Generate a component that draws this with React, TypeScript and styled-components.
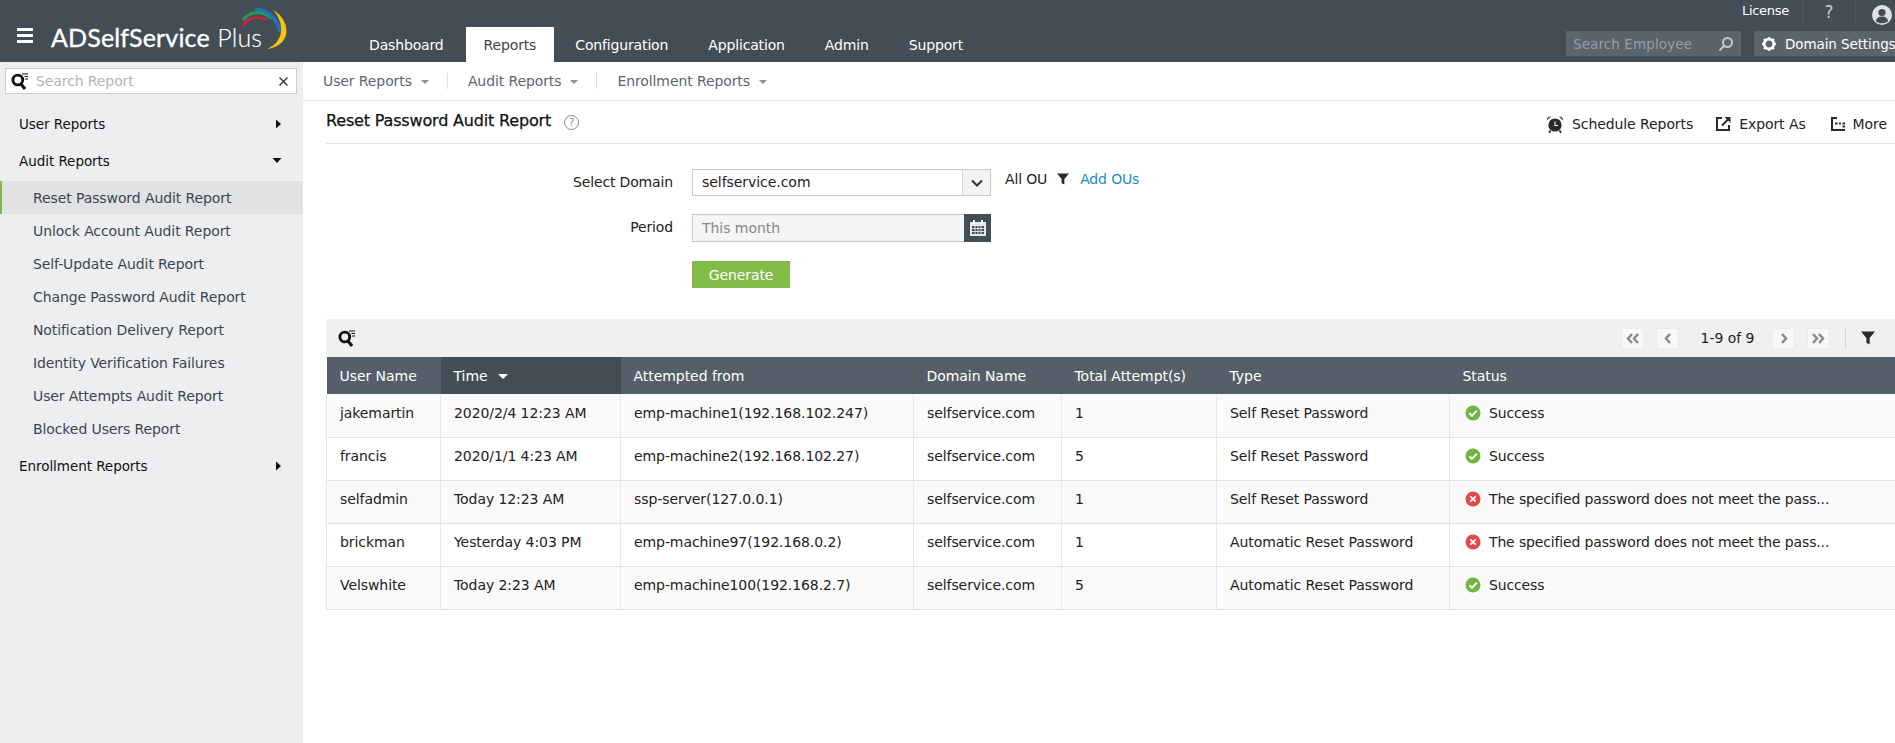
import React from "react";
import styled, { createGlobalStyle } from "styled-components";

const FONT = `"DejaVu Sans", Verdana, sans-serif`;

const Global = createGlobalStyle`
  html, body { margin: 0; padding: 0; height: 100%; overflow: hidden; background: #fff; }
  body { font-family: ${FONT}; font-size: 14px; color: #222; }
  #root { width: 1895px; height: 743px; overflow: hidden; }
  * { box-sizing: border-box; }
`;

const Page = styled.div`display: flex; flex-direction: column; width: 1895px; height: 743px;`;

const Header = styled.header`
  height: 62px; flex: none; background: #424d56; display: flex; align-items: stretch; color: #fff;
`;
const Burger = styled.div`
  width: 16px; height: 15px; margin: 28px 0 0 17px; flex: none;
  border-top: 3px solid #fff; border-bottom: 3px solid #fff; position: relative;
  &::after { content: ""; position: absolute; left: 0; right: 0; top: 3px; height: 3px; background: #fff; }
`;
const Logo = styled.div`
  width: 298px; flex: none; margin-left: 18px; display: flex; align-items: flex-start; padding-top: 21px;
  position: relative; white-space: nowrap;
  font: 400 25px/32px "Lato", sans-serif; letter-spacing: .15px; color: #fff; -webkit-text-stroke: .35px #fff;
  span { font-weight: 300; -webkit-text-stroke: .15px #fff; margin-left: 1px; }
  svg { position: absolute; left: 189px; top: 5px; }
`;
const Tabs = styled.nav`display: flex; align-items: flex-end; height: 62px;`;
const Tab = styled.div<{ $active?: boolean }>`
  height: 35px; padding: 1px ${p => (p.$active ? 18 : 20)}px 0; display: flex; align-items: center; justify-content: center;
  margin: 0 ${p => (p.$active ? 1 : 0)}px 0 ${p => (p.$active ? 2 : 0)}px;
  background: ${p => (p.$active ? "#fff" : "transparent")}; color: ${p => (p.$active ? "#444" : "#fff")};
  font-size: 14px; letter-spacing: -.15px;
`;
const HeaderRight = styled.div`
  margin-left: auto; display: flex; flex-direction: column; align-items: flex-start; width: 329px; flex: none;
`;
const TopLinks = styled.div`
  display: flex; align-items: center; height: 31px; padding-left: 176px; font-size: 13px; letter-spacing: -.3px;
`;
const License = styled.div`width: 61px; height: 24px; line-height: 22px; border-right: 1px solid #4f5a63; margin-top: -7px;`;
const Help = styled.div`
  width: 53px; height: 24px; line-height: 24px; text-align: center; border-right: 1px solid #4f5a63; font-size: 17px;
  color: #c9cdd1; margin-top: -7px; letter-spacing: 0;
`;
const Avatar = styled.svg`margin-left: 16px; flex: none; margin-top: -1px;`;
const BottomTools = styled.div`display: flex; gap: 13px; height: 25px;`;
const EmpSearch = styled.div`
  width: 175px; background: #59646d; display: flex; align-items: center; justify-content: space-between;
  padding: 0 7px; color: #95a0a8; font-size: 13.5px; letter-spacing: .1px;
`;
const DomainBtn = styled.div`
  width: 160px; background: #59646d; display: flex; align-items: center; gap: 8px; padding-left: 7px;
  color: #fff; font-size: 13.5px; white-space: nowrap; letter-spacing: -.1px;
`;

const Body = styled.div`flex: 1; display: flex; min-height: 0;`;

const Sidebar = styled.aside`width: 303px; flex: none; background: #eceef0; padding-top: 6px;`;
const SideSearch = styled.div`
  margin: 0 6px 0 5px; height: 26px; background: #fff; border: 1px solid #ccc; display: flex; align-items: center;
  padding: 0 7px 0 5px; gap: 7px; color: #b4b4b4; font-size: 14px; letter-spacing: -.1px;
  span { flex: 1; }
`;
const SideGroup = styled.div<{ $first?: boolean }>`
  height: 37px; margin-top: ${p => (p.$first ? 11 : 0)}px; display: flex; align-items: center; justify-content: space-between;
  padding: 0 21px 0 19px; color: #111; font-size: 13.5px; letter-spacing: -.05px;
`;
const SideList = styled.div`padding: 2px 0;`;
const SideItem = styled.div<{ $active?: boolean }>`
  height: 33.1px; padding-left: ${p => (p.$active ? 31 : 33)}px; display: flex; align-items: center;
  color: #3d4650; font-size: 14px; letter-spacing: -.1px;
  background: ${p => (p.$active ? "#e0e2e4" : "transparent")};
  border-left: ${p => (p.$active ? "2px solid #7cbb44" : "0")};
`;

const Main = styled.main`flex: 1; min-width: 0; display: flex; flex-direction: column;`;
const SubNav = styled.div`
  height: 39px; flex: none; border-bottom: 1px solid #e4e4e4; display: flex; align-items: center; padding-left: 20px;
  color: #5c6670; font-size: 14px; letter-spacing: -.1px;
`;
const SubItem = styled.div`
  display: flex; align-items: center; gap: 9px; padding-right: 18px; margin-right: 20px; height: 16px;
  border-right: 1px solid #e2e2e2;
  &:last-child { border-right: 0; }
`;
const Caret = styled.i<{ $color?: string; $size?: number }>`
  display: block; width: 0; height: 0;
  border-left: ${p => p.$size ?? 4.5}px solid transparent; border-right: ${p => p.$size ?? 4.5}px solid transparent;
  border-top: ${p => p.$size ?? 4.5}px solid ${p => p.$color || "#8a9199"}; margin-top: 2px;
`;
const Content = styled.div`padding-left: 23px; display: flex; flex-direction: column;`;
const TitleRow = styled.div`
  height: 43px; flex: none; border-bottom: 1px solid #e4e4e4; display: flex; align-items: center;
`;
const Title = styled.h1`
  margin: -2px 0 0; font: 400 16px/1 ${FONT}; color: #111; letter-spacing: -.17px; -webkit-text-stroke: .25px #111;
`;
const HelpCircle = styled.span`
  width: 15px; height: 15px; margin-left: 13px; border-radius: 50%; border: 1px solid #8d8d8d; color: #8d8d8d;
  font-size: 10px; display: flex; align-items: center; justify-content: center;
`;
const Actions = styled.div`margin-left: auto; display: flex; align-items: center; padding: 3px 8px 0 0; height: 100%;`;
const Action = styled.div`
  display: flex; align-items: center; gap: 8px; margin-left: 23px; color: #222; font-size: 14px; letter-spacing: -.08px;
  &:last-child { margin-left: 25px; }
`;

const Form = styled.div`
  display: grid; grid-template-columns: 347px 299px auto; grid-template-rows: 27px 29px 27px; column-gap: 19px; row-gap: 18px;
  padding-top: 25px; align-items: start;
`;
const Label = styled.label`text-align: right; font-size: 14px; line-height: 27px; color: #222; letter-spacing: -.15px;`;
const SelectBox = styled.div`
  height: 27px; border: 1px solid #c9c9c9; display: flex; align-items: stretch; background: #fff;
`;
const SelectValue = styled.div<{ $lh?: number }>`flex: 1; padding-left: 9px; line-height: ${p => p.$lh ?? 25}px; letter-spacing: -.05px;`;
const SelectBtn = styled.div`
  width: 28px; background: #f3f3f3; border-left: 1px solid #d5d5d5; display: flex; align-items: center; justify-content: center;
`;
const OuBlock = styled.div`
  display: flex; align-items: center; margin-left: -5px; height: 20px; letter-spacing: -.15px;
  a { color: #1a8ccc; margin-left: 11px; }
  svg { margin-left: 10px; }
`;
const DateBox = styled.div`
  height: 28px; border: 1px solid #c9c9c9; background: #f5f5f5; display: flex; align-items: stretch; color: #888;
`;
const DateBtn = styled.div`
  width: 27px; margin: -1px -1px -1px 0; background: #424d56; display: flex; align-items: center; justify-content: center;
`;
const Generate = styled.button`
  grid-column: 2; width: 98px; height: 27px; border: 0; padding: 0; background: #7fbc48; color: #fff;
  font: 14px ${FONT}; letter-spacing: -.1px;
`;

const Toolbar = styled.div`
  margin-top: 31px; height: 38px; background: #f0f0f0; display: flex; align-items: center; padding-left: 12px; padding-right: 20px;
`;
const Pager = styled.div`margin-left: auto; display: flex; align-items: center;`;
const PageBtn = styled.div<{ $mr?: number }>`
  width: 23px; height: 21px; background: #f8f8f8; border: 1px solid #ebebeb; display: flex; align-items: center; justify-content: center;
  margin-right: ${p => p.$mr ?? 0}px;
`;
const PageText = styled.div`margin: 0 17px 0 21px; width: 55px; text-align: center; white-space: nowrap; letter-spacing: -.05px;`;
const PageSep = styled.div`width: 1px; height: 21px; background: #d4d4d4; margin: 0 15px;`;

const Table = styled.table`
  border-collapse: collapse; table-layout: fixed; width: 1569px; font-size: 14px;
`;
const Th = styled.th<{ $sorted?: boolean }>`
  height: 37px; padding: 0 0 0 13px; background: ${p => (p.$sorted ? "#424d56" : "#565f69")}; color: #fff;
  font-weight: 400; text-align: left; letter-spacing: -.05px;
`;
const ThInner = styled.span`display: inline-flex; align-items: center; gap: 10px;`;
const Tr = styled.tr<{ $odd?: boolean }>`
  background: ${p => (p.$odd ? "#fafafa" : "#fff")};
`;
const Td = styled.td`
  height: 43px; padding: 0 0 5px 13px; border-bottom: 1px solid #e2e2e2; border-right: 1px solid #e8e8e8; color: #222;
  white-space: nowrap; letter-spacing: -.08px;
  &:first-child { border-left: 1px solid #e8e8e8; }
  &:last-child { border-right: 0; letter-spacing: -.15px; }
`;
const Status = styled.div`display: flex; align-items: center; gap: 8px; padding-left: 2px;`;

const ScanIcon = () => (
  <svg width="18" height="18" viewBox="0 0 18 18" fill="none">
    <circle cx="6.8" cy="8" r="4.9" stroke="#111" strokeWidth="2.9" />
    <path d="M10 12 14 17" stroke="#111" strokeWidth="3" />
    <path d="M11 2h6M13.5 4.5H17M14 7h3" stroke="#111" strokeWidth="1.1" />
  </svg>
);
const Cross = () => (
  <svg width="11" height="11" viewBox="0 0 11 11"><path d="M1.5 1.5l8 8M9.5 1.5l-8 8" stroke="#333" strokeWidth="1.4" /></svg>
);
const RightTri = () => (
  <svg width="7" height="10" viewBox="0 0 7 10"><path d="M1 0.5 6 5 1 9.5Z" fill="#111" /></svg>
);
const DownTri = () => (
  <svg width="10" height="7" viewBox="0 0 10 7"><path d="M.5 1h9L5 6Z" fill="#111" /></svg>
);
const Funnel = ({ s = 13 }: { s?: number }) => (
  <svg width={s} height={s} viewBox="0 0 13 13"><path d="M0 .5h13L8 6.5V12.5L5 11V6.5Z" fill="#2a2a2a" /></svg>
);
const Ok = () => (
  <svg width="16" height="16" viewBox="0 0 16 16"><circle cx="8" cy="8" r="7.5" fill="#6fb53f" /><path d="M4.3 8.2 7 10.9 11.8 5.6" stroke="#fff" strokeWidth="2" fill="none" /></svg>
);
const Bad = () => (
  <svg width="16" height="16" viewBox="0 0 16 16"><circle cx="8" cy="8" r="7.5" fill="#e5484d" /><path d="M5.3 5.3l5.4 5.4M10.7 5.3l-5.4 5.4" stroke="#fff" strokeWidth="1.8" /></svg>
);
const Dbl = ({ right }: { right?: boolean }) => (
  <svg width="13" height="11" viewBox="0 0 13 11" fill="none" stroke="#868b90" strokeWidth="2.5">
    <path d={right ? "M1 1l4 4.5-4 4.5M7 1l4 4.5-4 4.5" : "M12 1L8 5.5l4 4.5M6 1L2 5.5 6 10"} />
  </svg>
);
const Sgl = ({ right }: { right?: boolean }) => (
  <svg width="8" height="11" viewBox="0 0 8 11" fill="none" stroke="#868b90" strokeWidth="2.5">
    <path d={right ? "M2 1l4 4.5-4 4.5" : "M6 1L2 5.5 6 10"} />
  </svg>
);

const rows: [string, string, string, string, string, string, boolean, string][] = [
  ["jakemartin", "2020/2/4 12:23 AM", "emp-machine1(192.168.102.247)", "selfservice.com", "1", "Self Reset Password", true, "Success"],
  ["francis", "2020/1/1 4:23 AM", "emp-machine2(192.168.102.27)", "selfservice.com", "5", "Self Reset Password", true, "Success"],
  ["selfadmin", "Today 12:23 AM", "ssp-server(127.0.0.1)", "selfservice.com", "1", "Self Reset Password", false, "The specified password does not meet the pass..."],
  ["brickman", "Yesterday 4:03 PM", "emp-machine97(192.168.0.2)", "selfservice.com", "1", "Automatic Reset Password", false, "The specified password does not meet the pass..."],
  ["Velswhite", "Today 2:23 AM", "emp-machine100(192.168.2.7)", "selfservice.com", "5", "Automatic Reset Password", true, "Success"],
];
const sideItems = [
  "Reset Password Audit Report", "Unlock Account Audit Report", "Self-Update Audit Report", "Change Password Audit Report",
  "Notification Delivery Report", "Identity Verification Failures", "User Attempts Audit Report", "Blocked Users Report",
];
const widths = [114, 180, 293, 148, 155, 233, 446];
const heads = ["User Name", "Time", "Attempted from", "Domain Name", "Total Attempt(s)", "Type", "Status"];

export default function App() {
  return (
    <Page>
      <Global />
      <Header>
        <Burger />
        <Logo>
          ADSelfService&nbsp;<span>Plus</span>
          <svg width="50" height="48" viewBox="0 0 50 48" fill="none">
            <path d="M3 22C6 16 10 13 15 12.5C19 12 23 13 27 15" stroke="#c8243d" strokeWidth="2.8" />
            <path d="M3 15C8 9 14 7.5 18 7.5C23 7.5 28 10 32 14" stroke="#1e9b58" strokeWidth="3" />
            <path d="M15 4.5C25 3.5 37 11 40 27" stroke="#2170b8" strokeWidth="3.4" />
            <path d="M33 5C44 11 48 22 46 30C44 38 36 43 27 44C34 41 40 35 41 27C42 19 38 10 33 5Z" fill="#f1c40f" />
          </svg>
        </Logo>
        <Tabs>
          <Tab>Dashboard</Tab>
          <Tab $active>Reports</Tab>
          <Tab>Configuration</Tab>
          <Tab>Application</Tab>
          <Tab>Admin</Tab>
          <Tab>Support</Tab>
        </Tabs>
        <HeaderRight>
          <TopLinks>
            <License>License</License>
            <Help>?</Help>
            <Avatar width="20" height="20" viewBox="0 0 20 20">
              <circle cx="10" cy="10" r="10" fill="#dfe2e4" />
              <circle cx="10" cy="7.5" r="3.6" fill="#424d56" />
              <path d="M3.8 16c.8-3.4 3.2-4.6 6.2-4.6s5.4 1.2 6.2 4.6c-1.6 1.5-3.8 2.3-6.2 2.3s-4.6-.8-6.2-2.3Z" fill="#424d56" />
            </Avatar>
          </TopLinks>
          <BottomTools>
            <EmpSearch>
              Search Employee
              <svg width="16" height="16" viewBox="0 0 16 16" fill="none" stroke="#c4cace" strokeWidth="2">
                <circle cx="9.5" cy="6.5" r="4.5" /><path d="M6 10 1.5 14.5" />
              </svg>
            </EmpSearch>
            <DomainBtn>
              <svg width="16" height="16" viewBox="0 0 16 16" fill="none">
                <circle cx="8" cy="8" r="4.8" stroke="#fff" strokeWidth="2.8" />
                <path d="M8 1v2M8 13v2M1 8h2M13 8h2M3 3l1.5 1.5M11.5 11.5 13 13M13 3l-1.5 1.5M4.5 11.5 3 13" stroke="#fff" strokeWidth="2" />
              </svg>
              Domain Settings
            </DomainBtn>
          </BottomTools>
        </HeaderRight>
      </Header>
      <Body>
        <Sidebar>
          <SideSearch><ScanIcon /><span>Search Report</span><Cross /></SideSearch>
          <SideGroup $first>User Reports <RightTri /></SideGroup>
          <SideGroup>Audit Reports <DownTri /></SideGroup>
          <SideList>
            {sideItems.map((s, i) => <SideItem key={s} $active={i === 0}>{s}</SideItem>)}
          </SideList>
          <SideGroup>Enrollment Reports <RightTri /></SideGroup>
        </Sidebar>
        <Main>
          <SubNav>
            <SubItem>User Reports <Caret /></SubItem>
            <SubItem>Audit Reports <Caret /></SubItem>
            <SubItem>Enrollment Reports <Caret /></SubItem>
          </SubNav>
          <Content>
            <TitleRow>
              <Title>Reset Password Audit Report</Title>
              <HelpCircle>?</HelpCircle>
              <Actions>
                <Action>
                  <svg width="18" height="18" viewBox="0 0 18 18">
                    <circle cx="9" cy="10" r="6.6" fill="#2a2a2a" />
                    <path d="M9 6.5v4h3" stroke="#fff" strokeWidth="1.1" fill="none" />
                    <path d="M.8 5.5C.8 3 2.5 1.5 5 1.5ZM17.2 5.5C17.2 3 15.5 1.5 13 1.5Z" fill="#2a2a2a" />
                    <path d="M4.5 15.5 3 17.8M13.5 15.5 15 17.8" stroke="#2a2a2a" strokeWidth="1.8" />
                  </svg>
                  Schedule Reports
                </Action>
                <Action>
                  <svg width="15" height="15" viewBox="0 0 15 15" fill="none" stroke="#2a2a2a">
                    <path d="M6 2H1v12h12V9" strokeWidth="2" />
                    <path d="M6 9.5 12 3.5" strokeWidth="2" />
                    <path d="M8.5 1h6v6Z" fill="#2a2a2a" strokeWidth="0" />
                  </svg>
                  Export As
                </Action>
                <Action>
                  <svg width="14" height="14" viewBox="0 0 14 14" fill="none" stroke="#2a2a2a">
                    <path d="M6 1H1v12h13" strokeWidth="2" />
                    <path d="M4 6.5h2.5M8 6.5h2M11.5 6.5H14M11.5 9.5H14" strokeWidth="2" />
                  </svg>
                  More
                </Action>
              </Actions>
            </TitleRow>
            <Form>
              <Label>Select Domain</Label>
              <SelectBox>
                <SelectValue>selfservice.com</SelectValue>
                <SelectBtn>
                  <svg width="12" height="8" viewBox="0 0 12 8" fill="none" stroke="#333" strokeWidth="2"><path d="M1 1.5l5 5 5-5" /></svg>
                </SelectBtn>
              </SelectBox>
              <OuBlock>All OU <Funnel s={12} /><a>Add OUs</a></OuBlock>
              <Label>Period</Label>
              <DateBox>
                <SelectValue $lh={27}>This month</SelectValue>
                <DateBtn>
                  <svg width="18" height="18" viewBox="0 0 18 18">
                    <path d="M1 3h16v14H1Z" fill="#e6e8ea" />
                    <path d="M4 1h2v4H4ZM12 1h2v4h-2Z" fill="#fff" />
                    <path d="M3 7h12v8H3Z" fill="#424d56" />
                    <path d="M3 9.5h12M3 12.5h12M6 7v8M9 7v8M12 7v8" stroke="#e6e8ea" strokeWidth=".9" />
                  </svg>
                </DateBtn>
              </DateBox>
              <span />
              <Generate>Generate</Generate>
            </Form>
            <Toolbar>
              <ScanIcon />
              <Pager>
                <PageBtn $mr={12}><Dbl /></PageBtn>
                <PageBtn><Sgl /></PageBtn>
                <PageText>1-9 of 9</PageText>
                <PageBtn $mr={12}><Sgl right /></PageBtn>
                <PageBtn><Dbl right /></PageBtn>
                <PageSep />
                <Funnel s={14} />
              </Pager>
            </Toolbar>
            <Table>
              <colgroup>{widths.map((w, i) => <col key={i} width={w} />)}</colgroup>
              <thead>
                <tr>
                  {heads.map((h, i) => (
                    <Th key={h} $sorted={i === 1}>
                      {i === 1 ? <ThInner>{h}<Caret $color="#fff" $size={5.5} /></ThInner> : h}
                    </Th>
                  ))}
                </tr>
              </thead>
              <tbody>
                {rows.map((r, i) => (
                  <Tr key={r[0]} $odd={i % 2 === 0}>
                    {r.slice(0, 6).map((c, j) => <Td key={j}>{c}</Td>)}
                    <Td><Status>{r[6] ? <Ok /> : <Bad />}{r[7]}</Status></Td>
                  </Tr>
                ))}
              </tbody>
            </Table>
          </Content>
        </Main>
      </Body>
    </Page>
  );
}
